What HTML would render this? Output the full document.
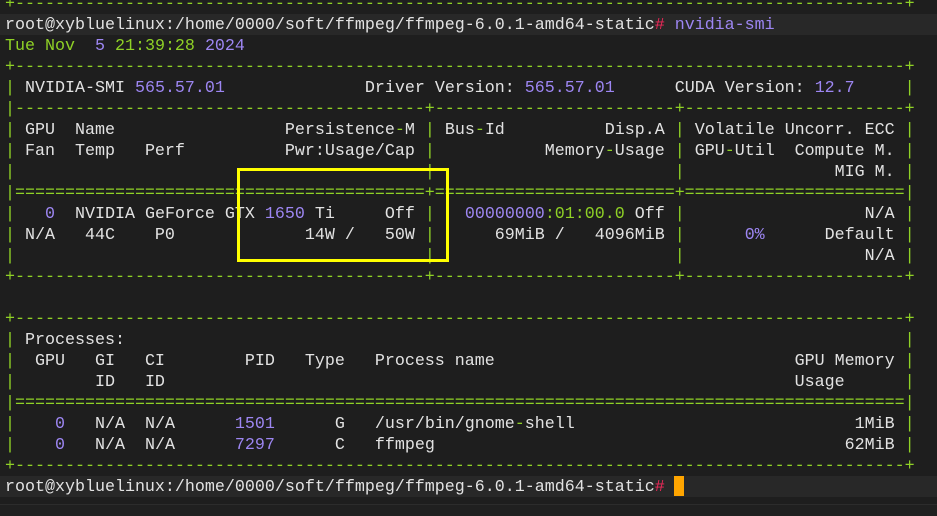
<!DOCTYPE html>
<html><head><meta charset="utf-8"><style>
html,body{margin:0;padding:0;background:#1e1e1e;width:937px;height:515px;overflow:hidden}
#t{position:absolute;left:5px;top:-6.5px;font-family:"Liberation Mono",monospace;font-size:16.67px;line-height:21px;color:#e2e2e2;white-space:pre}
.g{color:#8fd126}.p{color:#9d86f2}.r{color:#f0285a}
.hl{position:absolute;left:0;width:937px;height:21px;background:#282828}
#box{position:absolute;left:237px;top:168px;width:206px;height:88px;border:3px solid #ffff00}
#cur{position:absolute;left:674px;top:476px;width:10px;height:20px;background:#ffa500}
#bot{position:absolute;left:0;top:504px;width:937px;height:11px;background:#202020;border-top:1px solid #2c2c2c}
</style></head><body>
<div class="hl" style="top:14px"></div>
<div class="hl" style="top:476px"></div>
<div id="bot"></div>
<div id="t"><span class="g">+-----------------------------------------------------------------------------------------+</span>
root@xybluelinux:/home/0000/soft/ffmpeg/ffmpeg-6.0.1-amd64-static<span class="r">#</span> <span class="p">nvidia-smi</span>
<span class="g">Tue Nov  </span><span class="p">5</span><span class="g"> 21:39:28 </span><span class="p">2024</span>
<span class="g">+-----------------------------------------------------------------------------------------+</span>
<span class="g">|</span> NVIDIA-SMI <span class="p">565.57.01</span>              Driver Version: <span class="p">565.57.01</span>      CUDA Version: <span class="p">12.7</span>     <span class="g">|</span>
<span class="g">|-----------------------------------------+------------------------+----------------------+</span>
<span class="g">|</span> GPU  Name                 Persistence<span class="g">-</span>M <span class="g">|</span> Bus<span class="g">-</span>Id          Disp.A <span class="g">|</span> Volatile Uncorr. ECC <span class="g">|</span>
<span class="g">|</span> Fan  Temp   Perf          Pwr:Usage/Cap <span class="g">|</span>           Memory<span class="g">-</span>Usage <span class="g">|</span> GPU<span class="g">-</span>Util  Compute M. <span class="g">|</span>
<span class="g">|</span>                                         <span class="g">|</span>                        <span class="g">|</span>               MIG M. <span class="g">|</span>
<span class="g">|=========================================+========================+======================|</span>
<span class="g">|</span>   <span class="p">0</span>  NVIDIA GeForce GTX <span class="p">1650</span> Ti     Off <span class="g">|</span>   <span class="p">00000000</span><span class="g">:01:00.0</span> Off <span class="g">|</span>                  N/A <span class="g">|</span>
<span class="g">|</span> N/A   44C    P0             14W /   50W <span class="g">|</span>      69MiB /   4096MiB <span class="g">|</span>      <span class="p">0%</span>      Default <span class="g">|</span>
<span class="g">|</span>                                         <span class="g">|</span>                        <span class="g">|</span>                  N/A <span class="g">|</span>
<span class="g">+-----------------------------------------+------------------------+----------------------+</span>

<span class="g">+-----------------------------------------------------------------------------------------+</span>
<span class="g">|</span> Processes:                                                                              <span class="g">|</span>
<span class="g">|</span>  GPU   GI   CI        PID   Type   Process name                              GPU Memory <span class="g">|</span>
<span class="g">|</span>        ID   ID                                                               Usage      <span class="g">|</span>
<span class="g">|=========================================================================================|</span>
<span class="g">|</span>    <span class="p">0</span>   N/A  N/A      <span class="p">1501</span>      G   /usr/bin/gnome<span class="g">-</span>shell                            1MiB <span class="g">|</span>
<span class="g">|</span>    <span class="p">0</span>   N/A  N/A      <span class="p">7297</span>      C   ffmpeg                                         62MiB <span class="g">|</span>
<span class="g">+-----------------------------------------------------------------------------------------+</span>
root@xybluelinux:/home/0000/soft/ffmpeg/ffmpeg-6.0.1-amd64-static<span class="r">#</span></div>
<div id="box"></div>
<div id="cur"></div>
</body></html>
